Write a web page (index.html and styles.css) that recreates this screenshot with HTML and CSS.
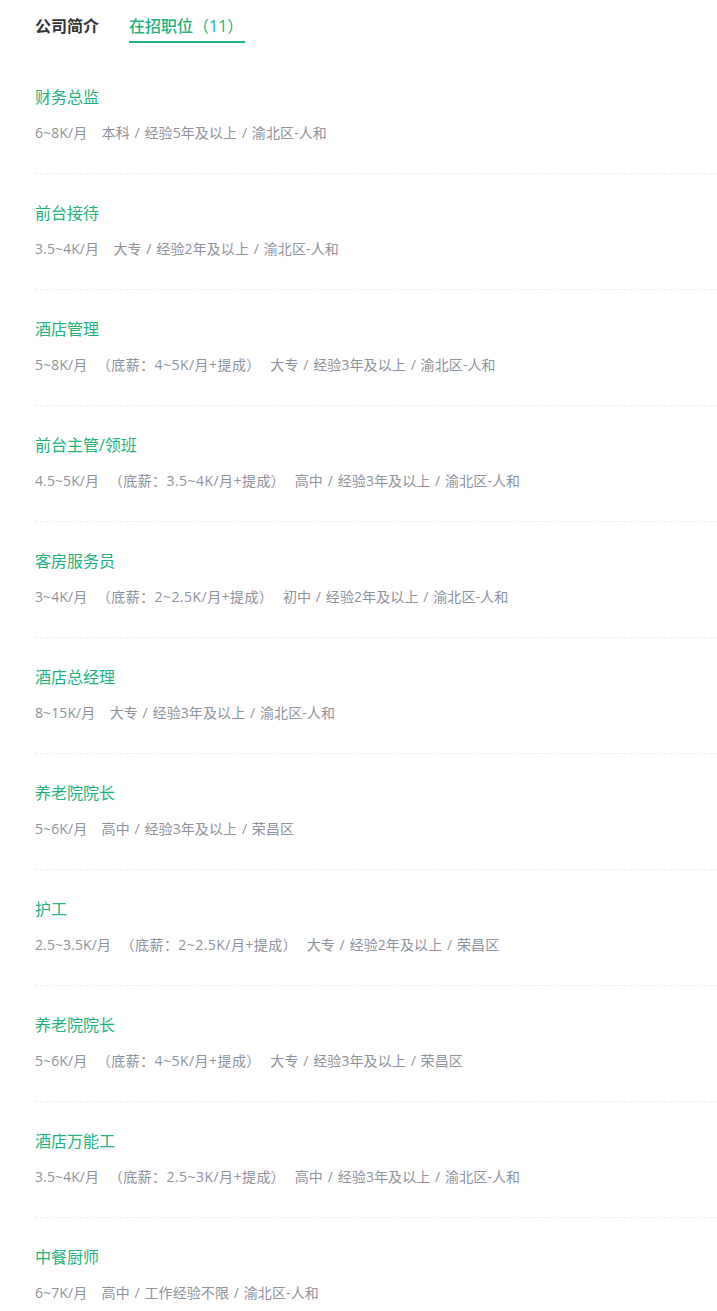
FILE: index.html
```html
<!DOCTYPE html>
<html lang="zh">
<head>
<meta charset="utf-8">
<link rel="stylesheet" href="styles.css">
</head>
<body>
<div class="page">
  <div class="tabs">
    <div class="tab">公司简介</div>
    <div class="tab active">在招职位<span class="count">（11）</span></div>
  </div>
  <ul class="jobs">
    <li class="job"><div class="title">财务总监</div><div class="meta">6~8K/月   本科 / 经验5年及以上 / 渝北区-人和</div></li>
    <li class="job"><div class="title">前台接待</div><div class="meta">3.5~4K/月   大专 / 经验2年及以上 / 渝北区-人和</div></li>
    <li class="job"><div class="title">酒店管理</div><div class="meta">5~8K/月  <span class="base">（底薪：4~5K/月+提成）</span>  大专 / 经验3年及以上 / 渝北区-人和</div></li>
    <li class="job"><div class="title">前台主管/领班</div><div class="meta">4.5~5K/月  <span class="base">（底薪：3.5~4K/月+提成）</span>  高中 / 经验3年及以上 / 渝北区-人和</div></li>
    <li class="job"><div class="title">客房服务员</div><div class="meta">3~4K/月  <span class="base">（底薪：2~2.5K/月+提成）</span>  初中 / 经验2年及以上 / 渝北区-人和</div></li>
    <li class="job"><div class="title">酒店总经理</div><div class="meta">8~15K/月   大专 / 经验3年及以上 / 渝北区-人和</div></li>
    <li class="job"><div class="title">养老院院长</div><div class="meta">5~6K/月   高中 / 经验3年及以上 / 荣昌区</div></li>
    <li class="job"><div class="title">护工</div><div class="meta">2.5~3.5K/月  <span class="base">（底薪：2~2.5K/月+提成）</span>  大专 / 经验2年及以上 / 荣昌区</div></li>
    <li class="job"><div class="title">养老院院长</div><div class="meta">5~6K/月  <span class="base">（底薪：4~5K/月+提成）</span>  大专 / 经验3年及以上 / 荣昌区</div></li>
    <li class="job"><div class="title">酒店万能工</div><div class="meta">3.5~4K/月  <span class="base">（底薪：2.5~3K/月+提成）</span>  高中 / 经验3年及以上 / 渝北区-人和</div></li>
    <li class="job"><div class="title">中餐厨师</div><div class="meta">6~7K/月   高中 / 工作经验不限 / 渝北区-人和</div></li>
  </ul>
</div>
</body>
</html>
```

FILE: styles.css
```css
html, body {
  margin: 0;
  padding: 0;
  background: #fff;
}
body {
  font-family: "Open Sans", "Noto Sans CJK SC", sans-serif;
}
.page {
  padding-left: 35px;
}
.tabs {
  display: flex;
  gap: 30px;
  padding-top: 14px;
}
.tab {
  font-size: 16px;
  line-height: 24px;
  font-weight: bold;
  color: #333;
  padding-bottom: 3px;
  border-bottom: 2px solid transparent;
}
.tab.active {
  color: #21b27d;
  font-weight: 500;
  border-bottom-color: #21b27d;
  padding-right: 2px;
}
.count {
  font-weight: normal;
}
.jobs {
  list-style: none;
  margin: 15px 0 0 0;
  padding: 0;
}
.job {
  padding: 29px 0 30px 0;
  border-bottom: 1px dashed #ececec;
}
.job:last-child {
  border-bottom: none;
}
.title {
  font-size: 16px;
  line-height: 20px;
  color: #21b27d;
}
.meta {
  margin-top: 16px;
  font-size: 14px;
  line-height: 20px;
  color: #8e929b;
  white-space: pre;
  word-spacing: 1px;
  letter-spacing: 0.1px;
}
.base {
  letter-spacing: 0.45px;
}
```
